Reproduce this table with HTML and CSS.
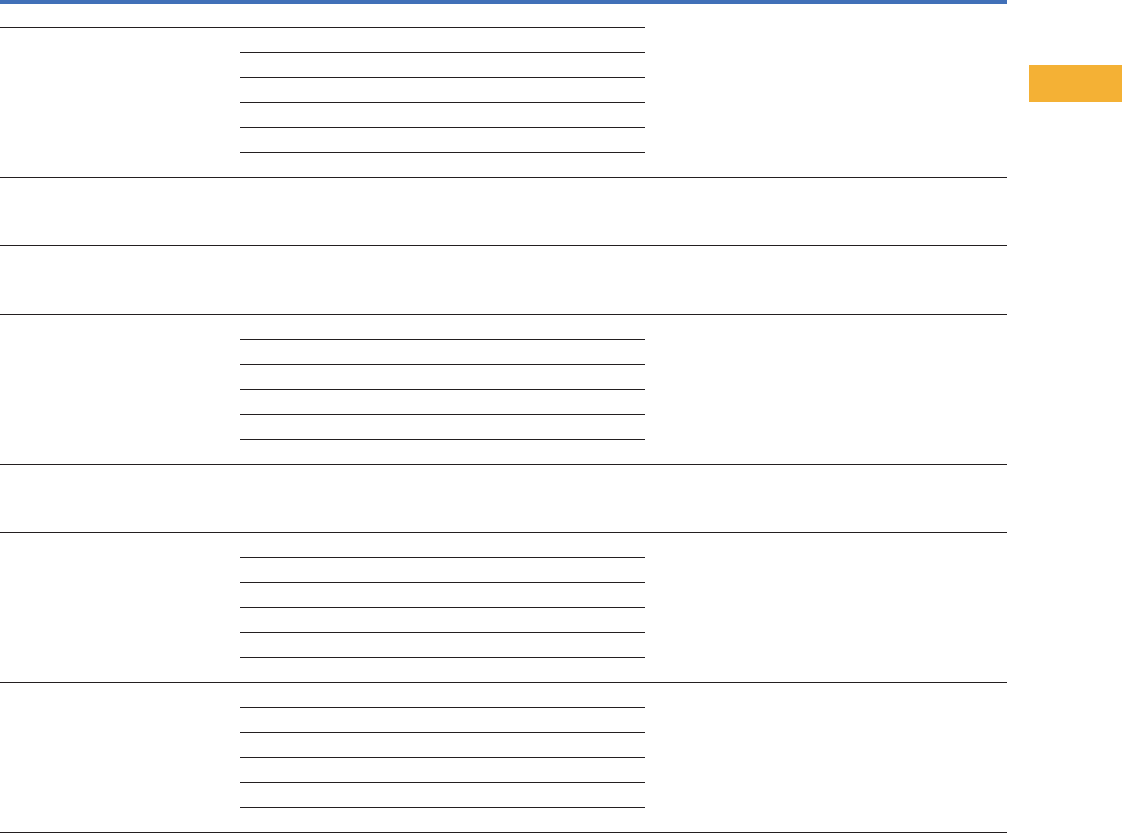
FILE: index.html
```html
<!DOCTYPE html>
<html lang="en">
<head>
  <meta charset="UTF-8" />
  <meta name="viewport" content="width=device-width, initial-scale=1.0"/>
  <title>Table</title>
  <link rel="stylesheet" href="styles.css">
</head>
<body>
  <div class="page">
    <div class="sheet">
      <div class="head">
        <div class="head-cell"></div>
      </div>

      <div class="group">
        <div class="label"></div>
        <div class="items">
          <div class="item"></div><div class="item"></div><div class="item"></div>
          <div class="item"></div><div class="item"></div><div class="item"></div>
        </div>
        <div class="note"></div>
      </div>

      <div class="single"></div>
      <div class="single tall"></div>

      <div class="group">
        <div class="label"></div>
        <div class="items">
          <div class="item"></div><div class="item"></div><div class="item"></div>
          <div class="item"></div><div class="item"></div><div class="item"></div>
        </div>
        <div class="note"></div>
      </div>

      <div class="single"></div>

      <div class="group">
        <div class="label"></div>
        <div class="items">
          <div class="item"></div><div class="item"></div><div class="item"></div>
          <div class="item"></div><div class="item"></div><div class="item"></div>
        </div>
        <div class="note"></div>
      </div>

      <div class="group">
        <div class="label"></div>
        <div class="items">
          <div class="item"></div><div class="item"></div><div class="item"></div>
          <div class="item"></div><div class="item"></div><div class="item"></div>
        </div>
        <div class="note"></div>
      </div>
    </div>

    <div class="side">
      <div class="tab"></div>
    </div>
  </div>
</body>
</html>
```

FILE: styles.css
```css
:root {
  --line: #231f20;
  --blue: #4170b8;
  --orange: #f4b135;
}
body {
  margin: 0;
  background: #fff;
  font-family: "Liberation Sans", Arial, sans-serif;
}
.page {
  display: flex;
  align-items: flex-start;
}
.sheet {
  width: 1007px;
  border-top: 4px solid var(--blue);
}
.head {
  height: 24px;
  display: flex;
}
.head-cell {
  width: 645px;
  height: 23px;
  border-bottom: 1px solid var(--line);
}
.group {
  display: grid;
  grid-template-columns: 240px 405px 362px;
  border-bottom: 1px solid var(--line);
}
.items { display: flex; flex-direction: column; }
.item {
  height: 24px;
  border-bottom: 1px solid var(--line);
}
.item:last-child { border-bottom: none; }
.single {
  height: 67px;
  border-bottom: 1px solid var(--line);
}
.single.tall { height: 68px; }
.side {
  margin-left: 22px;
  padding-top: 65px;
}
.tab {
  width: 93px;
  height: 37px;
  background: var(--orange);
}
```
